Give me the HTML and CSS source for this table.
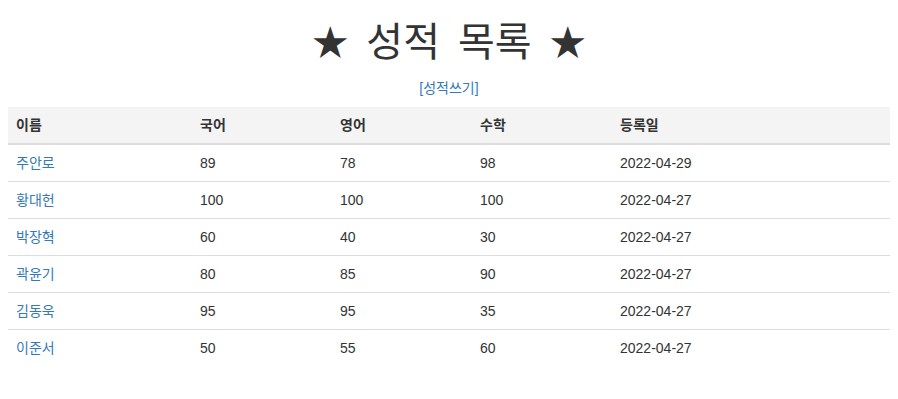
FILE: index.html
```html
<!DOCTYPE html>
<html lang="ko">
<head>
<meta charset="utf-8">
<title>성적 목록</title>
<link rel="stylesheet" href="styles.css">
</head>
<body>
<div class="page">
  <h1 class="title"><span class="star">★</span> 성적 목록 <span class="star">★</span></h1>
  <p class="actions"><a href="#">[성적쓰기]</a></p>
  <table class="grades">
    <thead>
      <tr>
        <th class="c-name">이름</th>
        <th class="c-score">국어</th>
        <th class="c-score">영어</th>
        <th class="c-score">수학</th>
        <th class="c-date">등록일</th>
      </tr>
    </thead>
    <tbody>
      <tr><td><a href="#">주안로</a></td><td>89</td><td>78</td><td>98</td><td>2022-04-29</td></tr>
      <tr><td><a href="#">황대헌</a></td><td>100</td><td>100</td><td>100</td><td>2022-04-27</td></tr>
      <tr><td><a href="#">박장혁</a></td><td>60</td><td>40</td><td>30</td><td>2022-04-27</td></tr>
      <tr><td><a href="#">곽윤기</a></td><td>80</td><td>85</td><td>90</td><td>2022-04-27</td></tr>
      <tr><td><a href="#">김동욱</a></td><td>95</td><td>95</td><td>35</td><td>2022-04-27</td></tr>
      <tr><td><a href="#">이준서</a></td><td>50</td><td>55</td><td>60</td><td>2022-04-27</td></tr>
    </tbody>
  </table>
</div>
</body>
</html>
```
FILE: styles.css
```css
html, body {
  margin: 0;
  padding: 0;
  background: #fff;
}
body {
  font-family: "Liberation Sans", "Noto Sans CJK KR", sans-serif;
  font-size: 14px;
  line-height: 20px;
  color: #333;
}
.page {
  padding: 0 8px;
}
.title {
  margin: 20px 0 0;
  height: 44px;
  font-family: "Liberation Sans", "Noto Sans CJK KR", sans-serif;
  font-weight: 400;
  font-size: 40px;
  line-height: 44px;
  word-spacing: 7px;
  text-align: center;
  color: #333;
}
.star {
  font-size: 36px;
  line-height: 0;
}
.actions {
  margin: 14px 0 9px;
  text-align: center;
}
a {
  color: #337ab7;
  text-decoration: none;
}
.grades {
  width: 100%;
  table-layout: fixed;
  border-collapse: collapse;
  border-spacing: 0;
}
.grades th,
.grades td {
  padding: 8px;
  text-align: left;
  vertical-align: top;
}
.grades th {
  background: #f4f4f4;
  font-weight: 700;
  border-bottom: 2px solid #ddd;
}
.grades tbody tr + tr td {
  border-top: 1px solid #ddd;
}
.c-name { width: 168px; }
.c-score { width: 124px; }
.c-date { width: auto; }
```
